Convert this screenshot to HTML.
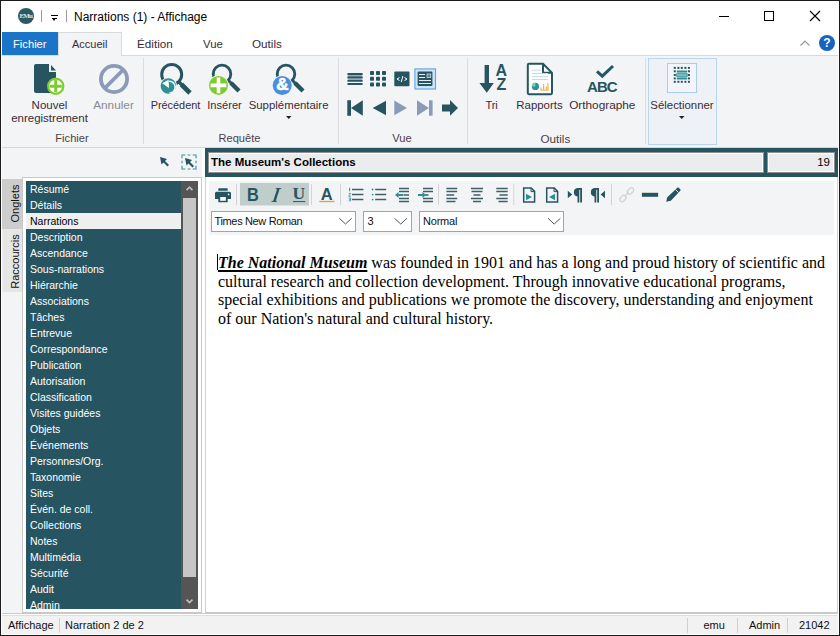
<!DOCTYPE html>
<html><head><meta charset="utf-8">
<style>
*{box-sizing:border-box;margin:0;padding:0}
html,body{width:840px;height:636px;overflow:hidden;background:#fff}
body{position:relative;font-family:"Liberation Sans",sans-serif;font-size:12px;color:#000}
.a{position:absolute}
.t{position:absolute;white-space:nowrap;line-height:1}
.c{position:absolute;white-space:nowrap;line-height:1;width:200px;text-align:center}
.rl{font-size:11.5px;color:#3b2b36}
.li{position:absolute;left:4px;color:#fff;font-size:10.5px;white-space:nowrap;line-height:1}
svg{position:absolute;overflow:visible}
</style></head><body>
<div class="a" style="left:0;top:0;width:840px;height:636px;border:1px solid #1b1b1b;z-index:50;pointer-events:none"></div>

<!-- title bar -->
<div class="a" style="left:18px;top:8px;width:16px;height:16px;border-radius:50%;background:#2a5a64"></div>
<div class="t" style="left:18px;top:12.5px;width:16px;font-family:'Liberation Serif',serif;font-size:7px;color:#dfe7ea;letter-spacing:-0.9px;text-align:center;font-weight:bold;text-indent:-0.5px">EMu</div>
<div class="a" style="left:41px;top:10px;width:1px;height:12px;background:#9a9a9a"></div>
<div class="a" style="left:51px;top:15px;width:7px;height:1px;background:#000"></div>
<div class="a" style="left:52px;top:18px;width:5px;height:1px;background:#000"></div><div class="a" style="left:52px;top:18px;width:0;height:0;border-left:2.5px solid transparent;border-right:2.5px solid transparent;border-top:3.5px solid #000"></div>
<div class="a" style="left:66px;top:10px;width:1px;height:12px;background:#9a9a9a"></div>
<div class="t" style="left:74px;top:11px;font-size:12px;color:#000">Narrations (1) - Affichage</div>

<!-- window controls -->
<div class="a" style="left:719px;top:16px;width:10px;height:1px;background:#000"></div>
<div class="a" style="left:764px;top:11px;width:10px;height:10px;border:1px solid #000"></div>
<svg style="left:810px;top:11px" width="10" height="10"><path d="M0 0L10 10M10 0L0 10" stroke="#000" stroke-width="1.1"/></svg>

<!-- tabs -->
<div class="a" style="left:2px;top:32px;width:56px;height:23px;background:#1a74c8"></div>
<div class="t" style="left:13px;top:39px;font-size:11.2px;color:#fff">Fichier</div>
<div class="a" style="left:58px;top:32px;width:64px;height:24px;background:#f3f4f6;border:1px solid #d9dadb;border-bottom:none;z-index:2"></div>
<div class="t" style="left:72px;top:39px;font-size:11px;color:#3b2b36;z-index:3">Accueil</div>
<div class="t" style="left:137px;top:38px;font-size:11.7px;color:#3b2b36">Édition</div>
<div class="t" style="left:203px;top:39px;font-size:11.4px;color:#3b2b36">Vue</div>
<div class="t" style="left:252px;top:38px;font-size:11.7px;color:#3b2b36">Outils</div>
<!-- collapse caret + help -->
<svg style="left:800px;top:40px" width="10" height="6"><path d="M0.5 5.5L5 1L9.5 5.5" fill="none" stroke="#9a9a9a" stroke-width="1.2"/></svg>
<div class="a" style="left:819px;top:35px;width:16px;height:16px;border-radius:50%;background:#1565c0"></div>
<div class="t" style="left:819px;top:37px;width:16px;text-align:center;font-size:12px;font-weight:bold;color:#fff">?</div>

<!-- ribbon -->
<div class="a" style="left:2px;top:55px;width:836px;height:93px;background:#f3f4f6;border-top:1px solid #d9dadb;border-bottom:1px solid #d5d6d7"></div>
<!-- separators -->
<div class="a" style="left:143px;top:58px;width:1px;height:86px;background:#dcdddf"></div>
<div class="a" style="left:338px;top:58px;width:1px;height:86px;background:#dcdddf"></div>
<div class="a" style="left:467px;top:58px;width:1px;height:86px;background:#dcdddf"></div>
<div class="a" style="left:645px;top:58px;width:1px;height:86px;background:#dcdddf"></div>

<!-- Fichier group -->
<svg style="left:0;top:0" width="840" height="150">
 <path d="M36 64H49V72H56V91A2 2 0 0 1 54 93H36A2 2 0 0 1 34 91V66A2 2 0 0 1 36 64Z" fill="#275461"/>
 <path d="M51 65L56 70.4H51Z" fill="#275461"/>
 <circle cx="55.7" cy="86.2" r="7.6" fill="#fff" stroke="#7ccd2b" stroke-width="2.2"/>
 <path d="M55.7 80V92.3M49.6 86.2H61.8" stroke="#7ccd2b" stroke-width="2.9"/>
 <circle cx="114" cy="79" r="13.1" fill="none" stroke="#8b9bb7" stroke-width="3.8"/>
 <path d="M104.5 88.5L123.5 69.5" stroke="#8b9bb7" stroke-width="3.8"/>
</svg>
<div class="c rl" style="left:-50.5px;top:100px;font-size:11.5px">Nouvel</div>
<div class="c rl" style="left:-50.5px;top:112.5px;font-size:11.5px">enregistrement</div>
<div class="c rl" style="left:13.5px;top:100px;color:#8e8a8a;font-size:11.8px">Annuler</div>
<div class="c rl" style="left:-28px;top:133px;color:#4d3f49;font-size:11.1px">Fichier</div>

<!-- Requête group -->
<svg style="left:0;top:0" width="840" height="150">
 <circle cx="171.7" cy="74.5" r="10" fill="none" stroke="#275461" stroke-width="3"/>
 <path d="M178.5 81.5L182 85" stroke="#275461" stroke-width="3.4"/><path d="M181.5 84.5L190 93" stroke="#275461" stroke-width="4.8"/>
 <circle cx="168.4" cy="86" r="8.6" fill="#f3f4f6"/>
 <circle cx="168.4" cy="86" r="7.8" fill="#2b9197"/>
 <path d="M162.2 83.3L168.6 79.8L169 88Z" fill="#fff"/><path d="M169.2 81.3A5.6 5.6 0 0 1 169.5 93" fill="none" stroke="#fff" stroke-width="1.5"/>
 <circle cx="222" cy="74" r="8.8" fill="none" stroke="#275461" stroke-width="2.8"/>
 <path d="M228.5 80.5L231.5 83.5" stroke="#275461" stroke-width="3"/><path d="M231 83L239 91" stroke="#275461" stroke-width="4.4"/>
 <circle cx="218.5" cy="85.4" r="10.3" fill="#f3f4f6"/>
 <circle cx="218.5" cy="85.4" r="9.5" fill="#7ccd2b"/>
 <path d="M218.5 77.5V93.3M210.6 85.4H226.4" stroke="#fff" stroke-width="3.6"/>
 <circle cx="286" cy="74" r="8.8" fill="none" stroke="#275461" stroke-width="2.8"/>
 <path d="M292.5 80.5L295.5 83.5" stroke="#275461" stroke-width="3"/><path d="M295 83L303 91" stroke="#275461" stroke-width="4.4"/>
 <circle cx="282.2" cy="85.5" r="10.3" fill="#f3f4f6"/>
 <circle cx="282.2" cy="85.5" r="9.5" fill="#4a8fdc"/>
 <path d="M285 86.5L288 82M278 88" fill="none"/>
</svg>
<div class="t" style="left:274.5px;top:76px;width:16px;text-align:center;font-size:17px;font-weight:bold;color:#fff;-webkit-text-stroke:0.6px #fff">&amp;</div>
<div class="c rl" style="left:75.5px;top:100px;font-size:10.9px">Précédent</div>
<div class="c rl" style="left:124.5px;top:100px;font-size:11.1px">Insérer</div>
<div class="c rl" style="left:188.6px;top:100px;font-size:11.4px">Supplémentaire</div>
<svg style="left:285.5px;top:116px" width="6" height="4"><path d="M0 0H5.5L2.75 3Z" fill="#222"/></svg>
<div class="c rl" style="left:139.5px;top:133px;color:#4d3f49;font-size:11.1px">Requête</div>

<!-- Vue group -->
<svg style="left:0;top:0" width="840" height="150">
 <g fill="#275461">
  <rect x="347.8" y="74" width="14.5" height="6.5" fill="#9aabb0"/>
  <rect x="347.3" y="73" width="15.5" height="1.9" rx="0.9"/>
  <rect x="347.3" y="76.4" width="15.5" height="1.9" rx="0.9"/>
  <rect x="347.3" y="79.9" width="15.5" height="1.9" rx="0.9"/>
  <rect x="347.3" y="83" width="15.5" height="1.9" rx="0.9"/>
  <rect x="370" y="71" width="4" height="4" rx="0.8"/><rect x="376" y="71" width="4" height="4" rx="0.8"/><rect x="382" y="71" width="4" height="4" rx="0.8"/>
  <rect x="370" y="76.8" width="4" height="4" rx="0.8"/><rect x="376" y="76.8" width="4" height="4" rx="0.8"/><rect x="382" y="76.8" width="4" height="4" rx="0.8"/>
  <rect x="370" y="82.5" width="4" height="4" rx="0.8"/><rect x="376" y="82.5" width="4" height="4" rx="0.8"/><rect x="382" y="82.5" width="4" height="4" rx="0.8"/>
  <rect x="394.3" y="71.5" width="15.2" height="14.8" rx="1"/>
 </g>
 <path d="M399.5 77.5L397 79L399.5 80.5M402.8 76L401.3 82M404.5 77.5L407 79L404.5 80.5" fill="none" stroke="#fff" stroke-width="1"/>
 <rect x="414.9" y="68.9" width="20.6" height="20.1" fill="#cde4f7" stroke="#5fa2e6" stroke-width="1.1"/>
 <rect x="417.6" y="71.5" width="14.8" height="14.5" rx="1" fill="#275461"/>
 <path d="M419 74.5H425M419 77.5H425M419 80.5H431M419 83.5H431" stroke="#e6eef0" stroke-width="1"/>
 <rect x="427" y="74" width="3.8" height="3.5" fill="#5f8088" stroke="#e6eef0" stroke-width="0.7"/>
 <g fill="#275461">
  <rect x="347.3" y="100.2" width="3.7" height="15.6"/>
  <path d="M351 108L362.8 100.2V115.8Z"/>
  <path d="M372.7 108L386 100.7V115.3Z"/>
 </g>
 <g fill="#8b9bb7">
  <path d="M407 108L394.3 100.6V115.3Z"/>
  <path d="M429 108L417 100.3V115.7Z"/>
  <rect x="429" y="100.3" width="3.6" height="15.4"/>
 </g>
 <path d="M442 104.4H450V100L458 107.9L450 115.8V111.5H442Z" fill="#275461"/>
</svg>
<div class="c rl" style="left:302px;top:133px;color:#4d3f49;font-size:11.2px">Vue</div>

<!-- Outils group -->
<svg style="left:0;top:0" width="840" height="150">
 <path d="M484.6 65H489V83H493.8L486.8 92.8L479.4 83H484.6Z" fill="#275461"/>
</svg>
<div class="t" style="left:495.5px;top:63px;font-size:16px;font-weight:bold;color:#275461">A</div>
<div class="t" style="left:496.5px;top:77px;font-size:16px;font-weight:bold;color:#275461">Z</div>
<svg style="left:0;top:0" width="840" height="150">
 <path d="M529 63.8H543L552 72.8V93A1.2 1.2 0 0 1 550.8 94.2H529A1.2 1.2 0 0 1 527.8 93V65A1.2 1.2 0 0 1 529 63.8Z" fill="#fff" stroke="#275461" stroke-width="2"/>
 <path d="M543 63.8V72.8H552" fill="none" stroke="#275461" stroke-width="2"/>
 <path d="M532 70.3H541M532 73.5H548M532 76.7H548M532 79.5H548" stroke="#bcdcf0" stroke-width="1.1"/>
 <circle cx="535.4" cy="86.4" r="3.6" fill="#2b9197"/>
 <path d="M535.4 86.4V82.8A3.6 3.6 0 0 0 531.8 86.4Z" fill="#69d3c8"/>
 <path d="M541 90V87.5M543.7 90V84M546.3 90V86.5M548 90V83" stroke="#e3a23a" stroke-width="1"/><path d="M540.5 90.2H548.5" stroke="#e3a23a" stroke-width="0.8"/>
 <path d="M597 71.4L602.3 76.2L613 66" fill="none" stroke="#275461" stroke-width="3"/>
</svg>
<div class="t" style="left:587px;top:79px;font-size:15px;font-weight:bold;color:#275461;letter-spacing:-0.9px">ABC</div>
<div class="c rl" style="left:391.6px;top:100px;font-size:11px">Tri</div>
<div class="c rl" style="left:439.5px;top:100px;font-size:11.45px">Rapports</div>
<div class="c rl" style="left:502.3px;top:100px;font-size:11.8px">Orthographe</div>
<div class="c rl" style="left:455.4px;top:133px;color:#4d3f49;font-size:11.7px">Outils</div>

<!-- Sélectionner -->
<div class="a" style="left:648px;top:58px;width:69px;height:87px;background:#eef2f7;border:1px solid #b8d6f2"></div>
<div class="a" style="left:667px;top:63px;width:30px;height:30px;background:#f3f5f8;border:1.5px solid #a6cef3"></div>
<svg style="left:0;top:0" width="840" height="150">
 <rect x="673.75" y="66.90" width="2" height="2" fill="#275461"/><rect x="673.75" y="70.30" width="2" height="2" fill="#275461"/><rect x="673.75" y="74.00" width="2" height="2" fill="#275461"/><rect x="673.75" y="77.40" width="2" height="2" fill="#275461"/><rect x="673.75" y="80.80" width="2" height="2" fill="#275461"/><rect x="677.40" y="66.90" width="2" height="2" fill="#275461"/><rect x="677.40" y="80.80" width="2" height="2" fill="#275461"/><rect x="680.80" y="66.90" width="2" height="2" fill="#275461"/><rect x="680.80" y="80.80" width="2" height="2" fill="#275461"/><rect x="684.40" y="66.90" width="2" height="2" fill="#275461"/><rect x="684.40" y="80.80" width="2" height="2" fill="#275461"/><rect x="687.90" y="66.90" width="2" height="2" fill="#275461"/><rect x="687.90" y="70.30" width="2" height="2" fill="#275461"/><rect x="687.90" y="74.00" width="2" height="2" fill="#275461"/><rect x="687.90" y="77.40" width="2" height="2" fill="#275461"/><rect x="687.90" y="80.80" width="2" height="2" fill="#275461"/>
 <rect x="676.7" y="70.5" width="10.5" height="1.8" rx="0.6" fill="#2b8f95"/>
 <rect x="676.7" y="73" width="10.5" height="4" rx="0.8" fill="#7fb8ba" stroke="#2b8f95" stroke-width="0.9"/>
 <rect x="676.7" y="77.8" width="10.5" height="1.8" rx="0.6" fill="#2b8f95"/>
</svg>
<div class="c rl" style="left:582px;top:100px;font-size:11.4px">Sélectionner</div>
<svg style="left:678.5px;top:116px" width="6" height="4"><path d="M0 0H5.5L2.75 3Z" fill="#222"/></svg>

<!-- main bg -->
<div class="a" style="left:2px;top:148px;width:836px;height:465px;background:#f3f4f6"></div>

<!-- left panel top tools -->
<svg style="left:0;top:0" width="840" height="200">
 <path d="M160 157L167 159L165 161L169 165L167.5 166.5L163.5 162.5L161.5 164.5Z" fill="#275461"/>
 <path d="M182 158.3V155H185.3M192.8 155H196V158.3M196 165.7V169H192.8M185.3 169H182V165.7M187.8 155H190.4M196 160.8V163.2M187.8 169H190.4M182 160.8V163.2" fill="none" stroke="#72b3b8" stroke-width="1.7" stroke-linejoin="round"/>
 <path d="M185 158L192 160L190 162L194 166L192.5 167.5L188.5 163.5L186.5 165.5Z" fill="#275461"/>
</svg>

<!-- side tabs -->
<div class="a" style="left:2px;top:179px;width:21px;height:50px;background:#cdcdcd"></div>
<div class="a" style="left:2px;top:229px;width:21px;height:63px;background:#e6e6e6;border-left:1px solid #f0f0f0"></div>
<div class="t" style="left:-6px;top:198px;font-size:11px;color:#111;transform:rotate(-90deg);width:42px;text-align:center">Onglets</div>
<div class="t" style="left:-15px;top:256px;font-size:11px;color:#111;transform:rotate(-90deg);width:60px;text-align:center">Raccourcis</div>

<!-- list frame -->
<div class="a" style="left:22px;top:177px;width:180px;height:436px;background:#fff;border:1px solid #c8c8c8"></div>
<div class="a" style="left:26px;top:181px;width:155px;height:427.6px;background:#275461;overflow:hidden">
<div class="li" style="top:3px">Résumé</div>
<div class="li" style="top:19px">Détails</div>
<div class="a" style="left:0;top:32px;width:155px;height:16px;background:#efefef"></div>
<div class="li" style="top:35px;color:#000">Narrations</div>
<div class="li" style="top:51px">Description</div>
<div class="li" style="top:67px">Ascendance</div>
<div class="li" style="top:83px">Sous-narrations</div>
<div class="li" style="top:99px">Hiérarchie</div>
<div class="li" style="top:115px">Associations</div>
<div class="li" style="top:131px">Tâches</div>
<div class="li" style="top:147px">Entrevue</div>
<div class="li" style="top:163px">Correspondance</div>
<div class="li" style="top:179px">Publication</div>
<div class="li" style="top:195px">Autorisation</div>
<div class="li" style="top:211px">Classification</div>
<div class="li" style="top:227px">Visites guidées</div>
<div class="li" style="top:243px">Objets</div>
<div class="li" style="top:259px">Événements</div>
<div class="li" style="top:275px">Personnes/Org.</div>
<div class="li" style="top:291px">Taxonomie</div>
<div class="li" style="top:307px">Sites</div>
<div class="li" style="top:323px">Évén. de coll.</div>
<div class="li" style="top:339px">Collections</div>
<div class="li" style="top:355px">Notes</div>
<div class="li" style="top:371px">Multimédia</div>
<div class="li" style="top:387px">Sécurité</div>
<div class="li" style="top:403px">Audit</div>
<div class="li" style="top:419px">Admin</div>
</div>
<!-- scrollbar -->
<div class="a" style="left:181px;top:181px;width:17px;height:427.6px;background:#555"></div>
<div class="a" style="left:183px;top:197.6px;width:13px;height:379.4px;background:#c6c6c6"></div>
<svg style="left:0;top:0" width="840" height="636">
 <path d="M186.5 190.2L189.5 187.2L192.5 190.2" fill="none" stroke="#bdbdbd" stroke-width="1.7"/>
 <path d="M186.5 599.6L189.5 602.6L192.5 599.6" fill="none" stroke="#bdbdbd" stroke-width="1.7"/>
</svg>

<div class="a" style="left:202px;top:148px;width:3px;height:465px;background:#fff"></div>
<!-- header bar -->
<div class="a" style="left:205px;top:148px;width:633px;height:29px;background:#275461"></div>
<div class="a" style="left:208px;top:152px;width:556px;height:21px;background:#ebecee;border:1px solid #8f8f8f;box-shadow:inset 1px 1px 0 #fff,inset -1px -1px 0 #fff"></div>
<div class="a" style="left:767px;top:152px;width:68px;height:21px;background:#ebecee;border:1px solid #8f8f8f;box-shadow:inset 1px 1px 0 #fff,inset -1px -1px 0 #fff"></div>
<div class="t" style="left:211px;top:157px;font-size:11.5px;font-weight:bold;color:#000">The Museum's Collections</div>
<div class="t" style="left:700px;top:157px;width:130px;text-align:right;font-size:11.5px;color:#000">19</div>

<!-- editor -->
<div class="a" style="left:205px;top:177px;width:633px;height:436px;background:#fff;border:1px solid #d0d0d0;border-top:none;border-bottom-color:#c8c8c8"></div>
<div class="a" style="left:209px;top:181px;width:625px;height:54px;background:#f3f4f6"></div>

<!-- editor toolbar -->
<svg style="left:0;top:0" width="840" height="240">
 <g fill="#275461">
  <rect x="218.3" y="188.2" width="9.4" height="2.5" rx="0.5"/>
  <path d="M216.5 191.8H229.5A1.5 1.5 0 0 1 231 193.3V199H227.7V202.3H218.3V199H215V193.3A1.5 1.5 0 0 1 216.5 191.8Z"/>
 </g>
 <rect x="220.2" y="197" width="5.6" height="3.8" fill="#fff"/>
 <circle cx="228.6" cy="194.4" r="0.8" fill="#fff"/>
 <path d="M236.5 184V205M311.5 184V205M340.5 184V205M438.5 184V205M513.8 184V205M611.5 184V205" stroke="#d3d4d6" stroke-width="1"/>
 <rect x="240" y="183" width="69" height="22.5" fill="#bfcdcb"/>
 <path d="M273 201.8L277.3 188.2H279.8L275.5 201.8Z" fill="#275461"/><path d="M275.8 188.6H281.2M271.5 201.4H276.9" stroke="#275461" stroke-width="0.9"/>
 <path d="M293 201.6H305.3" stroke="#275461" stroke-width="1"/>
 <path d="M319.3 201.5H334.6" stroke="#eaa22c" stroke-width="1.3"/>
 <g stroke="#3f5e66" stroke-width="1.5">
  <path d="M352 189.5H363.4M352 194.6H363.4M352 199.6H363.4"/>
  <path d="M375.2 189.5H386.2M375.2 194.6H386.2M375.2 199.6H386.2"/>
  <path d="M399 188.4H409M399 191.5H409M403.5 195H409M399 198.4H409M399 201.4H409"/>
  <path d="M423 188.4H433M423 191.5H433M423 195H428.5M423 198.4H433M423 201.4H433"/>
  <path d="M446.4 188.4H457.2M446.4 191.6H457.2M446.4 195H454.2M446.4 198.4H457.2M446.4 201.4H455.5"/>
  <path d="M471 188.4H483M471.5 191.6H482.5M473.5 195H480.5M471 198.4H483M473 201.4H481"/>
  <path d="M496.3 188.4H507.7M496.3 191.6H507.7M499.5 195H507.7M496.3 198.4H507.7M498.5 201.4H507.7"/>
 </g>
 <g fill="#2a8f95">
  <path d="M349 188.2L350.2 187.6V191.2H349.2"/>
  <circle cx="372.6" cy="189.5" r="0.9"/><circle cx="372.6" cy="194.6" r="0.9"/><circle cx="372.6" cy="199.6" r="0.9"/>
  <path d="M395 195L398.5 192V194H403V196H398.5V198Z"/>
  <path d="M426 195L422.5 192V194H418V196H422.5V198Z"/>
  <path d="M526 193.8L532 197L526 200.2Z"/>
  <path d="M555 193.8L549 197L555 200.2Z"/>
 </g>
 <path d="M348.7 193.4H350.7L348.7 196.2H350.9M348.7 198H350.7V200.8H348.7M349.2 199.4H350.7" fill="none" stroke="#2a8f95" stroke-width="0.8"/>
 <g fill="none" stroke="#275461" stroke-width="1.5">
  <path d="M523.7 188H531.2L534.6 191.4V201.9H523.7Z"/>
  <path d="M531 188V191.6H534.6" stroke-width="1"/>
  <path d="M546.7 188H554.2L557.6 191.4V201.9H546.7Z"/>
  <path d="M554 188V191.6H557.6" stroke-width="1"/>
 </g>
 <g fill="#275461">
  <path d="M567.8 190.7L572.2 194.5L567.8 198.3Z"/>
  <path d="M577.5 188H582V202.5H580.2V189.8H579.3V202.5H577.5V196.5A4.3 4.3 0 0 1 577.5 188Z"/>
  <path d="M605 190.7L600.6 194.5L605 198.3Z"/>
  <path d="M594.5 188H599V202.5H597.2V189.8H596.3V202.5H594.5V196.5A4.3 4.3 0 0 1 594.5 188Z"/>
  <rect x="641.9" y="192.8" width="16.2" height="4"/>
  <path d="M666.2 201.8L667.3 197.2L677.3 187.7A1 1 0 0 1 678.7 187.7L680.3 189.3A1 1 0 0 1 680.3 190.7L670.8 200.7Z"/>
 </g>
 <path d="M675.5 189.5L678.5 192.5" stroke="#f3f4f6" stroke-width="0.9"/>
 <g fill="none" stroke="#d2d2d2" stroke-width="1.2">
  <rect x="620.6" y="195" width="4.6" height="7" rx="2.3" transform="rotate(45 622.9 198.5)"/>
  <rect x="628.2" y="187.5" width="4.6" height="7" rx="2.3" transform="rotate(45 630.5 191)"/>
  <path d="M624.5 196.5L628.5 192.5"/>
 </g>
</svg>
<div class="t" style="left:246.5px;top:185px;font-size:19px;font-weight:bold;color:#275461;transform:scaleX(0.86);transform-origin:0 0">B</div>
<div class="t" style="left:292.5px;top:185px;font-family:'Liberation Serif',serif;font-size:17.5px;font-weight:bold;color:#275461">U</div>
<div class="t" style="left:320.8px;top:185.5px;font-size:16.5px;font-weight:bold;color:#275461">A</div>
<!-- dropdowns -->
<div class="a" style="left:211px;top:211px;width:145px;height:21px;background:#fff;border:1px solid #a3a3a3"></div>
<div class="t" style="left:214.5px;top:216px;font-size:11px;letter-spacing:-0.35px;color:#111">Times New Roman</div>
<div class="a" style="left:363px;top:211px;width:49px;height:21px;background:#fff;border:1px solid #a3a3a3"></div>
<div class="t" style="left:367.5px;top:216px;font-size:11px;color:#111">3</div>
<div class="a" style="left:419px;top:211px;width:145px;height:21px;background:#fff;border:1px solid #a3a3a3"></div>
<div class="t" style="left:423px;top:216px;font-size:11px;letter-spacing:-0.2px;color:#111">Normal</div>
<svg style="left:0;top:0" width="840" height="240">
 <path d="M339.3 218.3L345.5 224L351.7 218.3M394.5 218.3L400.7 224L406.9 218.3M548 218.3L554.2 224L560.4 218.3" fill="none" stroke="#555" stroke-width="1"/>
</svg>


<!-- editor text -->
<div class="a" style="left:217px;top:254px;width:1px;height:16px;background:#000"></div>
<div class="a" style="left:218px;top:254px;width:615px;font-family:'Liberation Serif',serif;font-size:16px;line-height:18.5px;color:#000;white-space:nowrap">
<b><i><u style="text-decoration-thickness:2px;text-underline-offset:1.5px">The National Museum</u></i></b> was founded in 1901 and has a long and proud history of scientific and<br>cultural research and collection development. Through innovative educational programs,<br>special exhibitions and publications we promote the discovery, understanding and enjoyment<br>of our Nation's natural and cultural history.
</div>

<!-- status bar -->
<div class="a" style="left:2px;top:613px;width:836px;height:21px;background:#f2f2f2;border-top:1px solid #c8c8c8;box-shadow:inset 0 1px 0 #fff,inset 0 2px 0 #dedede"></div>
<div class="t" style="left:8px;top:619.5px;font-size:11px;color:#111">Affichage</div>
<div class="a" style="left:59px;top:618px;width:1px;height:15px;background:#d0d0d0"></div>
<div class="t" style="left:65px;top:619.5px;font-size:11px;color:#111">Narration 2 de 2</div>
<div class="a" style="left:687px;top:618px;width:1px;height:15px;background:#d0d0d0"></div>
<div class="a" style="left:737px;top:618px;width:1px;height:15px;background:#d0d0d0"></div>
<div class="a" style="left:787px;top:618px;width:1px;height:15px;background:#d0d0d0"></div>
<div class="t" style="left:703.5px;top:619.5px;font-size:11px;color:#111">emu</div>
<div class="t" style="left:749px;top:619.5px;font-size:11px;color:#111">Admin</div>
<div class="t" style="left:799px;top:619.5px;font-size:11px;color:#111">21042</div>

</body></html>
